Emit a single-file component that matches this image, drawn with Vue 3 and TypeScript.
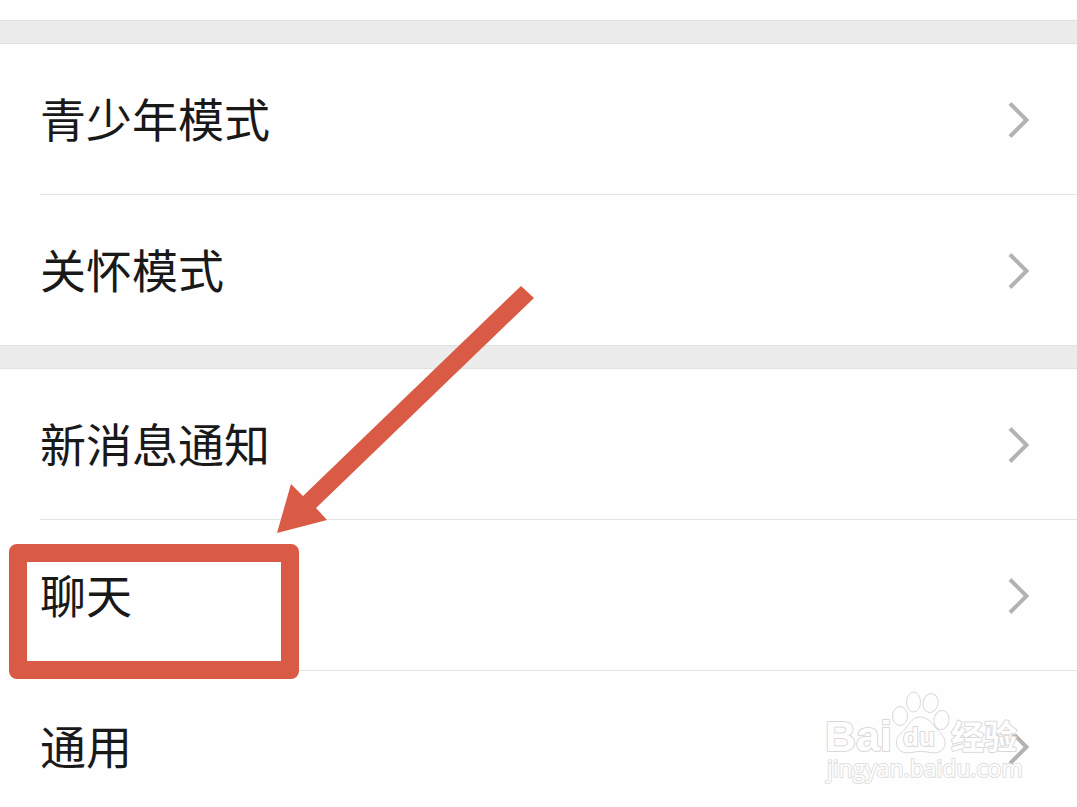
<script setup lang="ts">
interface SettingItem {
  id: string
  label: string
}

interface SettingGroup {
  id: string
  items: SettingItem[]
}

const groups: SettingGroup[] = [
  {
    id: 'modes',
    items: [
      { id: 'teen', label: '青少年模式' },
      { id: 'care', label: '关怀模式' },
    ],
  },
  {
    id: 'preferences',
    items: [
      { id: 'notifications', label: '新消息通知' },
      { id: 'chat', label: '聊天' },
      { id: 'general', label: '通用' },
    ],
  },
]
</script>

<template>
  <main class="settings">
    <ul v-for="group in groups" :key="group.id" class="group">
      <li v-for="item in group.items" :key="item.id" class="item">
        <button type="button" class="row">
          <span class="label">{{ item.label }}</span>
          <svg class="chevron" width="24" height="40" viewBox="0 0 24 40" aria-hidden="true">
            <path d="M3 4.5 L19.5 21 L3 37.5" />
          </svg>
        </button>
      </li>
    </ul>

    <div class="highlight" aria-hidden="true"></div>
    <svg class="arrow" width="260" height="250" viewBox="0 0 260 250" aria-hidden="true">
      <path d="M245 2 L258 14 L40 224 L51 236 L1 249 L15 200 L27 212 Z" />
    </svg>

    <svg class="watermark" width="210" height="100" viewBox="0 0 210 100" role="img" aria-label="Baidu 经验">
      <text class="brand" x="4" y="66">Bai</text>
      <g class="paw">
        <ellipse cx="79" cy="31" rx="7.5" ry="9.5" />
        <ellipse cx="92.5" cy="17" rx="7" ry="10" />
        <ellipse cx="109.500" cy="18" rx="7.5" ry="9.5" transform="rotate(12 109.5 18)" />
        <ellipse cx="120.500" cy="35" rx="7.500" ry="9.5" transform="rotate(8 120.5 35)" />
        <path d="M99 32 C106 32 111 38 115 43 C119 48 125 52 124 59 C123 66 117 69 109 67.500 C102 66 97 66 91 67.500 C82 69 76 66 75.500 58 C75 51 81 48 85 43 C89 38 92 32 99 32 Z" />
      </g>
      <text class="du" x="82" y="61">du</text>
      <text class="cjk" x="130" y="64">经验</text>
      <text class="site" x="6" y="92">jingyan.baidu.com</text>
    </svg>
  </main>
</template>

<style>
body {
  margin: 0;
}
</style>

<style scoped>
.settings {
  position: relative;
  box-sizing: border-box;
  height: 100vh;
  padding-top: 20px;
  overflow: hidden;
  background: #fefefe;
  font-family: "Noto Sans CJK SC", sans-serif;
}

.group {
  margin: 0;
  padding: 0;
  list-style: none;
}

.group::before {
  content: "";
  display: block;
  box-sizing: border-box;
  height: 24px;
  border-top: 1px solid #e1e1e1;
  border-bottom: 1px solid #e1e1e1;
  background: #ececec;
}

.item {
  margin-left: 40px;
}

.item:not(:last-child) {
  border-bottom: 1px solid #e4e4e4;
}

.row {
  display: flex;
  align-items: center;
  justify-content: space-between;
  width: 100%;
  height: 150px;
  margin: 0;
  padding: 0 46px 0 0;
  border: 0;
  background: transparent;
  color: #191919;
  font: inherit;
  font-size: 46px;
  line-height: 68px;
  text-align: left;
  cursor: pointer;
}

.label {
  padding-bottom: 5px;
}

.chevron path {
  fill: none;
  stroke: #b2b2b2;
  stroke-width: 4;
}

.highlight {
  position: absolute;
  top: 544px;
  left: 9px;
  box-sizing: border-box;
  width: 290px;
  height: 135px;
  border: 18px solid #d95a45;
  border-radius: 8px;
}

.arrow {
  position: absolute;
  top: 284px;
  left: 276px;
  fill: #d95a45;
}

.watermark {
  position: absolute;
  top: 685px;
  left: 821px;
  overflow: visible;
}

.watermark text,
.paw {
  fill: #fefefe;
  stroke: #d9d9d9;
  stroke-width: 1px;
}

.watermark text {
  paint-order: stroke;
  stroke-width: 2px;
  stroke-linejoin: round;
}

.brand {
  font: bold 43px "Liberation Sans", sans-serif;
}

.watermark .du {
  font: bold 26px "Liberation Sans", sans-serif;
}

.cjk {
  font: bold 33px "Noto Sans CJK SC", sans-serif;
}

.watermark .site {
  font: 23px "Open Sans", sans-serif;
  stroke: #e0e0e0;
}
</style>
